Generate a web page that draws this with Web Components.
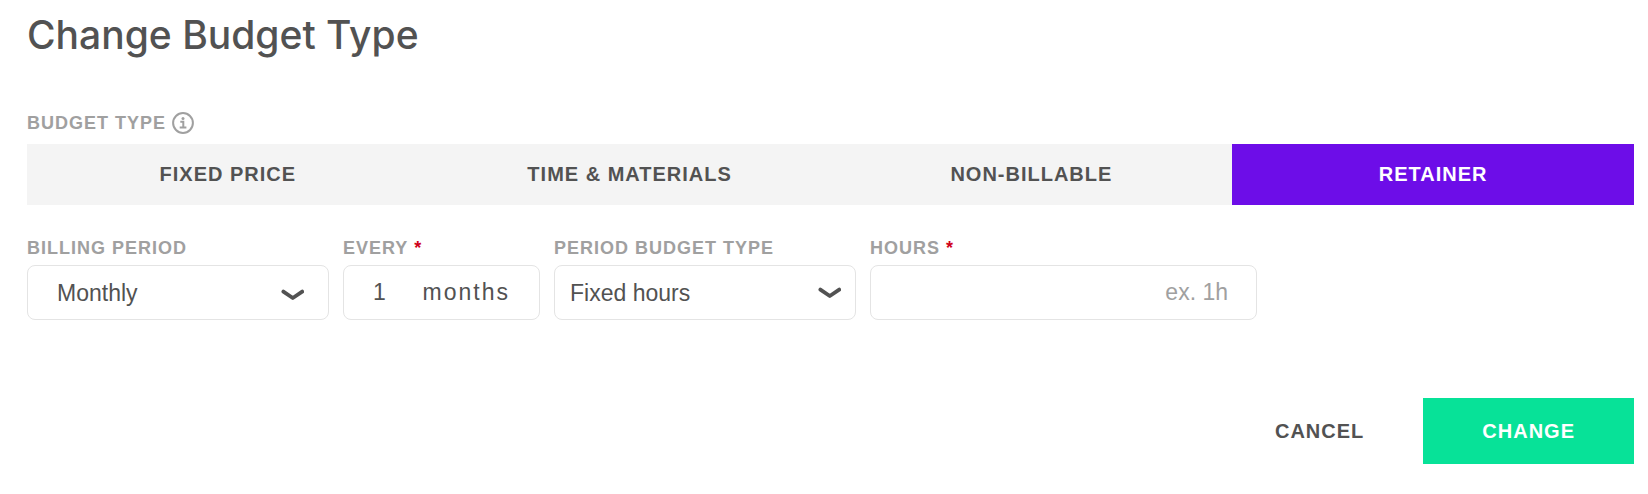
<!DOCTYPE html>
<html lang="en">
<head>
<meta charset="utf-8">
<title>Change Budget Type</title>
<style>
body { margin: 0; background: #fff; color: #525252; font-family: "Liberation Sans", Arial, sans-serif; }
</style>
</head>
<body>
<budget-dialog>
  <span slot="title">Change Budget Type</span>
  <budget-tabs></budget-tabs>
  <field-row>
    <select-field label="Billing period" value="Monthly" options="Weekly,Monthly,Yearly" class="inset"></select-field>
    <every-field></every-field>
    <select-field label="Period budget type" value="Fixed hours" options="Fixed hours,Fixed price"></select-field>
    <hours-field></hours-field>
  </field-row>
  <action-button slot="actions">Cancel</action-button>
  <action-button slot="actions" primary>Change</action-button>
</budget-dialog>

<script>
const caption = `
  .caption { display: flex; align-items: center; gap: 6px; height: 24px; font-size: 18px; line-height: 24px;
    font-weight: 700; letter-spacing: 1px; text-transform: uppercase; white-space: nowrap; color: #a0a0a0; }
  .required { color: #d0021b; }`;
const box = `
  * { box-sizing: border-box; }
  .box { height: 55px; border: 1px solid #e4e4e4; border-radius: 8px; background: #fff; }
  input, select { font: inherit; color: inherit; outline: none; min-width: 0; }`;

class Base extends HTMLElement {
  constructor() {
    super();
    this.attachShadow({ mode: "open" }).innerHTML = this.render();
  }
}

customElements.define("budget-dialog", class extends Base {
  render() {
    return `<style>
      :host { display: block; padding: 10px 14px 30px 27px; }
      h1 { margin: 0 0 51px; font: 500 39px/50px Inter, sans-serif; }
      footer { display: flex; justify-content: flex-end; margin-top: 78px; }
    </style>
    <h1><slot name="title"></slot></h1>
    <slot></slot>
    <footer><slot name="actions"></slot></footer>`;
  }
});

customElements.define("budget-tabs", class extends Base {
  render() {
    const tabs = ["Fixed price", "Time & materials", "Non-billable", "Retainer"];
    return `<style>${caption}
      :host { display: block; margin-bottom: 31px; }
      fieldset { margin: 0; padding: 0; border: 0; min-width: 0; }
      legend { padding: 0 0 9px; }
      svg { display: block; }
      .tabs { display: grid; grid-template-columns: repeat(4, 1fr); background: #f4f4f4; }
      label { display: grid; place-items: center; height: 61px; font-size: 20px; font-weight: 700;
        letter-spacing: 1px; text-transform: uppercase; cursor: pointer; }
      input { appearance: none; margin: 0; grid-area: 1 / 1; place-self: stretch; }
      input:checked { background: #6d0de8; }
      span { grid-area: 1 / 1; }
      input:checked + span { color: #fff; z-index: 1; }
    </style>
    <fieldset>
      <legend><div class="caption">Budget type
        <svg width="22" height="22" viewBox="0 0 22 22" fill="none" stroke="#a0a0a0" aria-hidden="true">
          <circle cx="11" cy="11" r="9.9" stroke-width="2"/>
          <path d="M8.3 9.7H11.3V15.4M7.7 15.4H14.4" stroke-width="2"/>
          <circle cx="11" cy="6.4" r="1.5" fill="#a0a0a0" stroke="none"/>
        </svg></div></legend>
      <div class="tabs">${tabs.map(t => `<label><input type="radio" name="type"${t === "Retainer" ? " checked" : ""}><span>${t.replace("&", "&amp;")}</span></label>`).join("")}</div>
    </fieldset>`;
  }
});

customElements.define("field-row", class extends Base {
  render() {
    return `<style>:host { display: flex; flex-wrap: wrap; gap: 14px; }</style><slot></slot>`;
  }
});

customElements.define("select-field", class extends Base {
  render() {
    const value = this.getAttribute("value");
    return `<style>${caption}${box}
      :host { display: block; flex: 0 1 302px; }
      .caption { margin-bottom: 5px; }
      .wrap { display: grid; align-items: center; font-size: 23px; }
      select { grid-area: 1 / 1; width: 100%; appearance: none; padding: 0 50px 0 15px; }
      svg { grid-area: 1 / 1; justify-self: end; margin-right: 15px; pointer-events: none; }
      :host(.inset) select { padding-left: 29px; }
      :host(.inset) svg { margin: 4px 25px 0 0; }
    </style>
    <label class="caption" for="f">${this.getAttribute("label")}</label>
    <div class="wrap">
      <select class="box" id="f">${this.getAttribute("options").split(",").map(o => `<option${o === value ? " selected" : ""}>${o}</option>`).join("")}</select>
      <svg width="23" height="12" viewBox="0 0 23 12" fill="none" stroke="#525252" stroke-width="3.8" stroke-linecap="round" stroke-linejoin="round" aria-hidden="true"><path d="M2.4 2.6L11.8 9L21.2 2.6"/></svg>
    </div>`;
  }
});

customElements.define("every-field", class extends Base {
  render() {
    return `<style>${caption}${box}
      :host { display: block; flex: 0 1 197px; }
      .caption { margin-bottom: 5px; }
      .box { display: flex; align-items: center; padding: 0 29px; font-size: 23px; }
      input { flex: 1; width: 0; padding: 0; border: 0; background: none; }
      span.unit { letter-spacing: 2px; }
    </style>
    <label class="caption" for="f">Every <span class="required">*</span></label>
    <div class="box"><input id="f" value="1" inputmode="numeric"><span class="unit">months</span></div>`;
  }
});

customElements.define("hours-field", class extends Base {
  render() {
    return `<style>${caption}${box}
      :host { display: block; flex: 0 1 387px; }
      .caption { margin-bottom: 5px; }
      input { display: block; width: 100%; padding: 0 28px; font-size: 23px; text-align: right; }
      input::placeholder { color: #a0a0a0; opacity: 1; }
    </style>
    <label class="caption" for="f">Hours <span class="required">*</span></label>
    <input class="box" id="f" placeholder="ex. 1h">`;
  }
});

customElements.define("action-button", class extends Base {
  render() {
    return `<style>
      button { height: 66px; padding: 0 59px; border: 0; background: none; color: inherit; cursor: pointer;
        font: inherit; font-size: 20px; font-weight: 700; letter-spacing: 1px; text-transform: uppercase; }
      :host { display: block; }
      :host([primary]) button { background: #07e298; color: #fff; }
    </style>
    <button type="button"><slot></slot></button>`;
  }
});
</script>
</body>
</html>
